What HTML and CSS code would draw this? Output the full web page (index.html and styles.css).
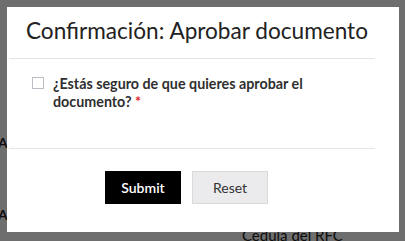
FILE: index.html
```html
<!DOCTYPE html>
<html lang="es">
<head>
    <meta charset="UTF-8">
    <meta name="viewport" content="width=device-width, initial-scale=1.0">
    <title>Confirmación</title>
    <link rel="stylesheet" href="styles.css">
</head>
<body>
<div class="page">
    <div class="page-row row-a"><span class="cell">Al</span></div>
    <div class="page-row row-b"><span class="cell">Al</span></div>
    <div class="page-row row-c"><span class="cell-right">Cedula del RFC</span></div>
</div>
<div class="backdrop"></div>
<div class="modal">
    <div class="modal-header">
        <h2 class="modal-title">Confirmación: Aprobar documento</h2>
    </div>
    <div class="modal-body">
        <label class="check-field">
            <span class="check-box"></span>
            <span class="check-label">¿Estás seguro de que quieres aprobar el documento? <span class="required">*</span></span>
        </label>
    </div>
    <div class="modal-footer">
        <button class="btn btn-submit">Submit</button>
        <button class="btn btn-reset">Reset</button>
    </div>
</div>
</body>
</html>
```

FILE: styles.css
```css
body { margin: 0; font-family: Lato, "Open Sans", sans-serif; background: #fff; width: 405px; height: 241px; overflow: hidden; }
.page { height: 241px; box-sizing: border-box; overflow: hidden; padding-top: 128px; color: #222; font-size: 14px; font-weight: bold; }
.page-row { height: 73px; }
.row-a { height: 64px; padding-top: 6px; }
.row-b { padding-top: 8px; height: 20px; }
.row-c { height: 20px; padding-left: 242px; font-weight: normal; font-size: 15px; }
.cell { margin-left: -2px; }

.backdrop { position: fixed; inset: 0; background: rgba(0, 0, 0, 0.57); }

.modal {
    position: absolute;
    left: 7px;
    top: 7px;
    width: 392px;
    height: 225px;
    background: #fff;
    box-sizing: border-box;
    padding-left: 2px;
    padding-right: 24px;
}
.modal-header { border-bottom: 1px solid #e4e4e4; height: 51px; }
.modal-title {
    margin: 0;
    padding: 9px 0 0 17px;
    font-size: 22.6px;
    font-weight: normal;
    color: #222;
    line-height: 30px;
    white-space: nowrap;
}
.modal-body { border-bottom: 1px solid #e4e4e4; height: 90px; padding-left: 23px; box-sizing: border-box; padding-top: 16px; }
.check-field { display: flex; gap: 9px; align-items: flex-start; }
.check-box { flex: none; width: 10px; height: 10px; border: 1px solid #b9bec4; margin-top: 2px; }
.check-label { font-size: 14.3px; font-weight: bold; color: #2f2f2f; line-height: 18px; width: 270px; }
.required { color: #e0262e; }

.modal-footer { display: flex; justify-content: center; gap: 11px; padding-top: 22px; padding-right: 11px; }
.btn {
    width: 76px;
    height: 33px;
    font-family: Lato, sans-serif;
    font-size: 14px;
    border-radius: 0;
    cursor: pointer;
}
.btn-submit { background: #000; color: #fff; border: none; font-weight: 600; }
.btn-reset { background: #ebebed; color: #333; border: 1px solid #dadada; }
```
